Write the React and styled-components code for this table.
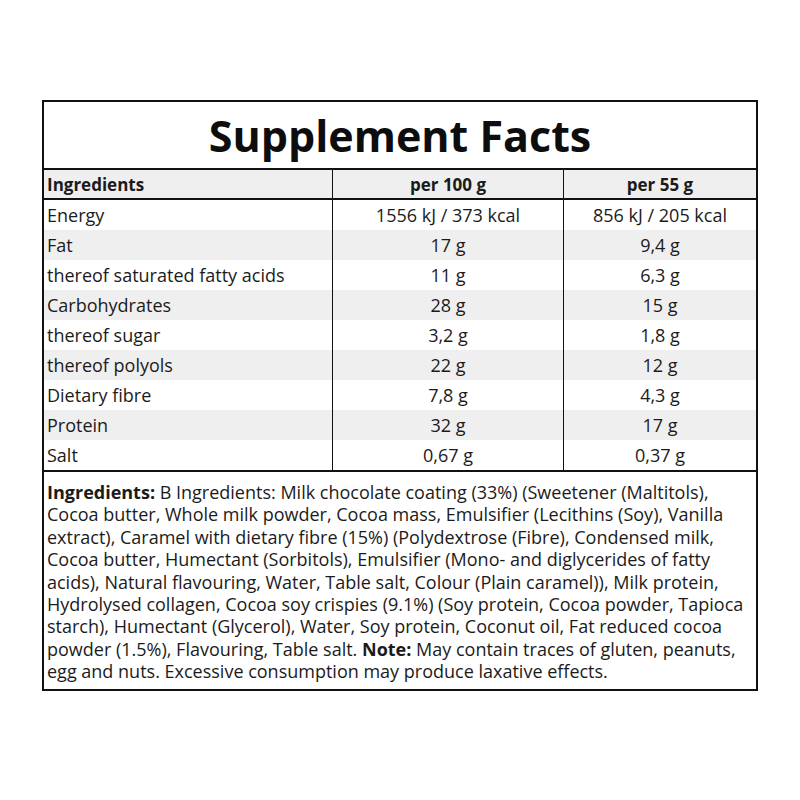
import styled, { createGlobalStyle } from "styled-components";

const GlobalStyle = createGlobalStyle`
   html, body {
      margin: 0;
      padding: 0;
      background: #fff;
   }
   body {
      font-family: "Open Sans", Lato, "Noto Sans", sans-serif;
      color: #1b1b1b;
   }
`;

const Page = styled.div`
   width: 800px;
   height: 800px;
   padding-top: 100px;
   box-sizing: border-box;
`;

const Label = styled.div`
   width: 716px;
   margin-left: 42px;
   border: 2px solid #111;
   box-sizing: border-box;
`;

const Title = styled.h1`
   margin: 0;
   height: 66px;
   display: flex;
   align-items: center;
   justify-content: center;
   font-size: 43px;
   font-weight: 700;
   color: #0d0d0d;
`;

const Row = styled.div`
   display: grid;
   grid-template-columns: 288px 231px 1fr;
   height: ${(p) => (p.$head ? "32px" : "30px")};
   background: ${(p) => (p.$shade ? "#efefef" : "#fff")};
   border-top: ${(p) => (p.$head ? "2px solid #111" : "none")};
   border-bottom: ${(p) => (p.$head ? "2px solid #111" : "none")};
   box-sizing: border-box;
   font-size: ${(p) => (p.$head ? "17px" : "18px")};
   font-weight: ${(p) => (p.$head ? 700 : 400)};
`;

const Cell = styled.div`
   display: flex;
   align-items: center;
   justify-content: ${(p) => (p.$name ? "flex-start" : "center")};
   padding-left: ${(p) => (p.$name ? "3px" : "0")};
   border-left: ${(p) => (p.$name ? "none" : "1px solid #111")};
   white-space: nowrap;
`;

const Ingredients = styled.p`
   margin: 0;
   border-top: 2px solid #111;
   padding: 9px 4px 6px 3px;
   font-size: 18px;
   line-height: 22.4px;
   white-space: nowrap;

   b {
      font-weight: 700;
   }
`;

const rows = [
   ["Energy", "1556 kJ / 373 kcal", "856 kJ / 205 kcal"],
   ["Fat", "17 g", "9,4 g"],
   ["thereof saturated fatty acids", "11 g", "6,3 g"],
   ["Carbohydrates", "28 g", "15 g"],
   ["thereof sugar", "3,2 g", "1,8 g"],
   ["thereof polyols", "22 g", "12 g"],
   ["Dietary fibre", "7,8 g", "4,3 g"],
   ["Protein", "32 g", "17 g"],
   ["Salt", "0,67 g", "0,37 g"],
];

const App = () => {
   return (
      <Page>
         <GlobalStyle />
         <Label>
            <Title>Supplement Facts</Title>
            <Row $head $shade>
               <Cell $name>Ingredients</Cell>
               <Cell>per 100 g</Cell>
               <Cell>per 55 g</Cell>
            </Row>
            {rows.map((r, i) => (
               <Row key={r[0]} $shade={i % 2 === 1}>
                  <Cell $name>{r[0]}</Cell>
                  <Cell>{r[1]}</Cell>
                  <Cell>{r[2]}</Cell>
               </Row>
            ))}
            <Ingredients>
               <b>Ingredients:</b> B Ingredients: Milk chocolate coating (33%) (Sweetener (Maltitols),
               <br />
               Cocoa butter, Whole milk powder, Cocoa mass, Emulsifier (Lecithins (Soy), Vanilla
               <br />
               extract), Caramel with dietary fibre (15%) (Polydextrose (Fibre), Condensed milk,
               <br />
               Cocoa butter, Humectant (Sorbitols), Emulsifier (Mono- and diglycerides of fatty
               <br />
               acids), Natural flavouring, Water, Table salt, Colour (Plain caramel)), Milk protein,
               <br />
               Hydrolysed collagen, Cocoa soy crispies (9.1%) (Soy protein, Cocoa powder, Tapioca
               <br />
               starch), Humectant (Glycerol), Water, Soy protein, Coconut oil, Fat reduced cocoa
               <br />
               powder (1.5%), Flavouring, Table salt. <b>Note:</b> May contain traces of gluten, peanuts,
               <br />
               egg and nuts. Excessive consumption may produce laxative effects.
            </Ingredients>
         </Label>
      </Page>
   );
};

export default App;
